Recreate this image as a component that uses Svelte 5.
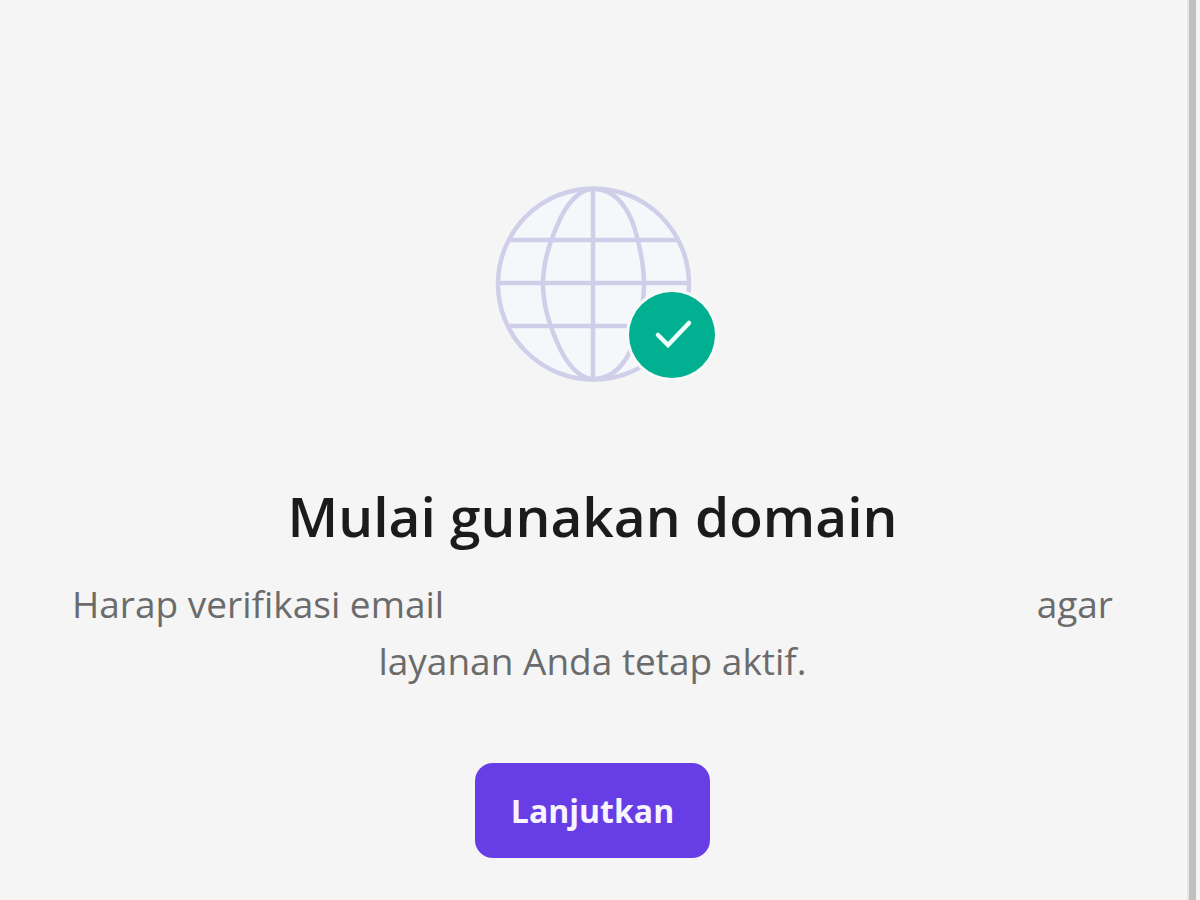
<script lang="ts">
    const title = 'Mulai gunakan domain';
    const action = 'Lanjutkan';
</script>

<div class="page">
    <main class="panel">
        <svg class="globe" viewBox="0 0 224 200" width="224" height="200" aria-hidden="true">
            <circle cx="99" cy="101" r="96" fill="#f5f7fb" />
            <g fill="none" stroke="#d0cfe9" stroke-width="4.5">
                <circle cx="98.500" cy="101" r="95.500" />
                <path d="M98 6C85 6 71 20 62 43c-8 18-14 38-14 58s6 40 14 58c9 22 23 37 36 37" />
                <path d="M98 6c24 0 38 22 44 48 4 15 7 32 7 47s-3 32-7 47c-6 26-20 48-44 48" />
                <path d="M98 5v192M14 57h170M3 100h192M14 143h170" />
            </g>
            <circle cx="177" cy="152" r="46" fill="#f8faf9" />
            <circle cx="177" cy="152" r="43" fill="#00b090" />
            <path d="M163 152l10 10 21-22" fill="none" stroke="#ecfffb" stroke-width="4.5" stroke-linecap="round" />
        </svg>

        <h1>{title}</h1>

        <p class="message">
            <span class="recipient">
                <span>Harap verifikasi email</span>
                <span>agar</span>
            </span>
            layanan Anda tetap aktif.
        </p>

        <button type="button">{action}</button>
    </main>
</div>

<style>
    :global(body) {
        background: #f5f5f5;
    }

    .page {
        padding-right: 4px;
        font-family: 'Open Sans', 'Noto Sans', sans-serif;
    }

    .panel {
        display: flex;
        flex-direction: column;
        align-items: center;
        box-sizing: border-box;
        min-height: 100vh;
        padding: 183px 76px 40px 72px;
        border-right: 7px solid #c0c0c0;
        box-shadow: inset -2px 0 0 #e8e8e8;
    }

    .globe {
        display: block;
        margin-left: 28px;
    }

    h1 {
        margin: 97px 0 0;
        color: #1b1b1b;
        font-size: 55px;
        font-weight: 600;
        line-height: 72px;
        text-align: center;
    }

    .message {
        align-self: stretch;
        margin: 23px 0 0;
        color: #6b6b6b;
        font-size: 37px;
        line-height: 57px;
        text-align: center;
    }

    .recipient {
        display: flex;
        justify-content: space-between;
    }

    button {
        margin-top: 74px;
        padding: 24px 36px;
        border: 0;
        border-radius: 18px;
        background: #673de6;
        color: #f7f3ff;
        font-family: inherit;
        font-size: 32px;
        font-weight: 700;
        line-height: 47px;
        cursor: pointer;
    }
</style>
